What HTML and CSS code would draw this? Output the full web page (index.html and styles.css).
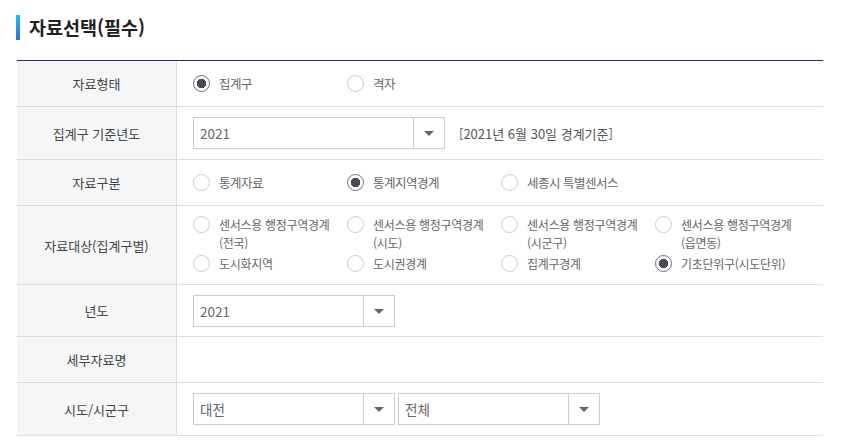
FILE: index.html
```html
<!DOCTYPE html>
<html lang="ko">

<head>
  <meta charset="UTF-8">
  <title>자료선택</title>
  <link rel="stylesheet" href="styles.css">
</head>

<body>
  <div class="wrap">
    <h2 class="title">자료선택(필수)</h2>

    <div class="form">
      <div class="row r1">
        <div class="th">자료형태</div>
        <div class="td">
          <label class="opt"><span class="radio on"></span>집계구</label>
          <label class="opt"><span class="radio"></span>격자</label>
        </div>
      </div>

      <div class="row r2">
        <div class="th">집계구 기준년도</div>
        <div class="td">
          <div class="select wide"><span class="val">2021</span><span class="arrow"></span></div>
          <span class="note">[2021년 6월 30일 경계기준]</span>
        </div>
      </div>

      <div class="row r3">
        <div class="th">자료구분</div>
        <div class="td">
          <label class="opt"><span class="radio"></span>통계자료</label>
          <label class="opt"><span class="radio on"></span>통계지역경계</label>
          <label class="opt"><span class="radio"></span>세종시 특별센서스</label>
        </div>
      </div>

      <div class="row r4">
        <div class="th">자료대상(집계구별)</div>
        <div class="td">
          <div class="grid">
            <label class="opt"><span class="radio"></span><span>센서스용 행정구역경계<br>(전국)</span></label>
            <label class="opt"><span class="radio"></span><span>센서스용 행정구역경계<br>(시도)</span></label>
            <label class="opt"><span class="radio"></span><span>센서스용 행정구역경계<br>(시군구)</span></label>
            <label class="opt"><span class="radio"></span><span>센서스용 행정구역경계<br>(읍면동)</span></label>
            <label class="opt"><span class="radio"></span>도시화지역</label>
            <label class="opt"><span class="radio"></span>도시권경계</label>
            <label class="opt"><span class="radio"></span>집계구경계</label>
            <label class="opt"><span class="radio on"></span>기초단위구(시도단위)</label>
          </div>
        </div>
      </div>

      <div class="row r5">
        <div class="th">년도</div>
        <div class="td">
          <div class="select"><span class="val">2021</span><span class="arrow"></span></div>
        </div>
      </div>

      <div class="row r6">
        <div class="th">세부자료명</div>
        <div class="td"></div>
      </div>

      <div class="row r7">
        <div class="th">시도/시군구</div>
        <div class="td">
          <div class="select"><span class="val">대전</span><span class="arrow"></span></div>
          <div class="select gap"><span class="val">전체</span><span class="arrow"></span></div>
        </div>
      </div>
    </div>
  </div>
</body>

</html>
```

FILE: styles.css
```css
body {
  margin: 0;
  padding: 0;
  background-color: #fff;
  font-family: "Noto Sans CJK KR", "Noto Sans", sans-serif;
  font-size: 13px;
  color: #555;
}

.wrap {
  width: 806px;
  padding: 15px 0 0 17px;
}

.title {
  margin: 0 0 0 -1px;
  height: 25px;
  padding-left: 9px;
  font-size: 18.5px;
  line-height: 25px;
  font-weight: bold;
  color: #222;
  border-left: 4px solid #2a86d8;
  border-image: linear-gradient(#22c3ee, #2f6fcf) 1;
}

.form {
  margin-top: 20px;
  border-top: 1px solid #1e2f63;
}

.row {
  display: flex;
  border-bottom: 1px solid #ddd;
  box-sizing: border-box;
}

.r1 { height: 46px; }
.r2 { height: 53px; }
.r3 { height: 46px; }
.r4 { height: 79px; }
.r5 { height: 52px; }
.r6 { height: 46px; }
.r7 { height: 53px; }

.th {
  width: 159px;
  flex: none;
  background-color: #f5f6f8;
  border-right: 1px solid #ddd;
  display: flex;
  align-items: center;
  justify-content: center;
  color: #444;
  font-size: 13px;
}

.td {
  flex: 1;
  display: flex;
  align-items: center;
  padding-left: 16px;
}

.opt {
  display: flex;
  align-items: center;
  width: 154px;
  color: #666;
  font-size: 12.5px;
  letter-spacing: -0.5px;
  line-height: 18px;
}

.radio {
  width: 17px;
  height: 17px;
  box-sizing: border-box;
  border: 1px solid #ccc;
  border-radius: 50%;
  margin-right: 9px;
  flex: none;
  background-color: #fff;
}

.radio.on {
  border: 1.5px solid #6b6f78;
  background: radial-gradient(circle, #474c58 0, #474c58 4.5px, #fff 5px);
}

.grid {
  display: grid;
  grid-template-columns: repeat(4, 154px);
  row-gap: 3px;
  margin-top: -2px;
}

.grid .opt {
  align-items: flex-start;
  font-size: 12px;
  letter-spacing: -0.3px;
}

.grid .opt .radio {
  margin-top: 0;
}

.select {
  display: flex;
  width: 202px;
  height: 32px;
  box-sizing: border-box;
  border: 1px solid #ccc;
  background-color: #fff;
}

.select.wide {
  width: 252px;
}

.select.gap {
  margin-left: 3px;
}

.val {
  flex: 1;
  padding-left: 6px;
  line-height: 30px;
  color: #666;
  font-size: 13.5px;
}

.arrow {
  width: 30px;
  border-left: 1px solid #ccc;
  position: relative;
}

.arrow::after {
  content: "";
  position: absolute;
  left: 10px;
  top: 13px;
  border-left: 5px solid transparent;
  border-right: 5px solid transparent;
  border-top: 5px solid #666;
}

.note {
  margin-left: 14px;
  color: #555;
}
```
